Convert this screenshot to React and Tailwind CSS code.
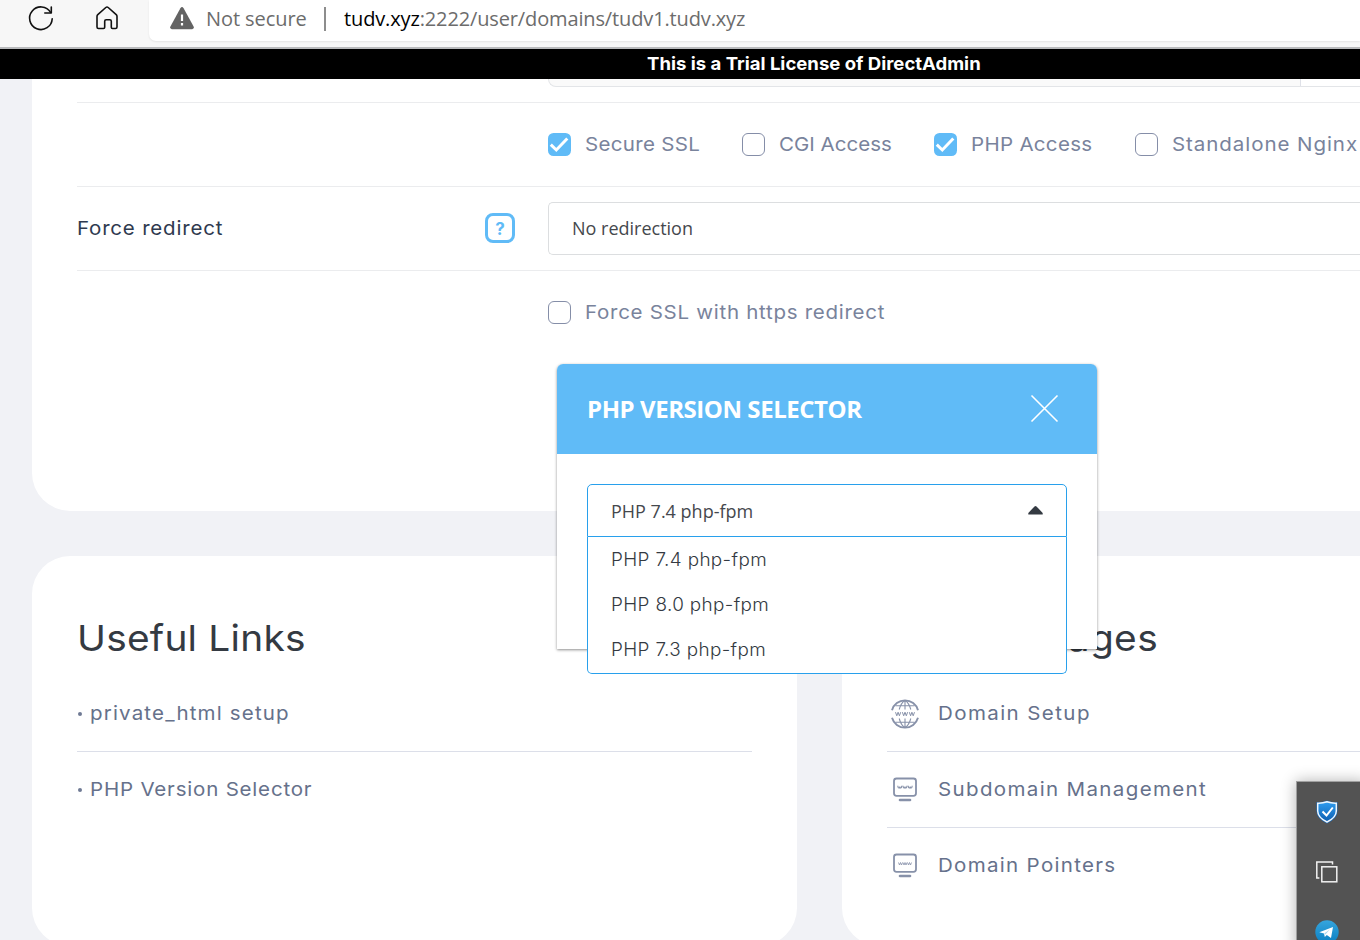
function BrowserBar() {
  return (
    <header className="flex h-[49px] shrink-0 items-start border-b-2 border-[#b9babc] bg-[#f7f7f7]">
      <div className="flex w-[149px] shrink-0 gap-[40px] pt-[4px] pl-[27px]">
        <svg width="28" height="28" viewBox="0 0 28 28" fill="none" stroke="#111" strokeWidth="1.6" strokeLinecap="round" strokeLinejoin="round">
          <path d="M25.2 14.7A11.3 11.3 0 1 1 23.6 8.400" />
          <path d="M24.300 3v6h-6.500" />
        </svg>
        <svg width="24" height="28" viewBox="0 0 24 28" fill="none" stroke="#111" strokeWidth="1.6" strokeLinejoin="round">
          <path d="M2 12.4q0-1 .8-1.700l8-7.200q1.200-1 2.400 0l8 7.200q.8.700.8 1.700v10.600q0 1.500-1.500 1.500h-3q-1.200 0-1.200-1.200v-6.100q0-1.500-1.500-1.500h-3.600q-1.500 0-1.500 1.500v6.100q0 1.200-1.200 1.200h-5q-1.500 0-1.500-1.500z" />
        </svg>
      </div>
      <div className="flex h-[41px] min-w-0 flex-1 rounded-bl-[7px] bg-white pl-[21px] font-['Open_Sans',sans-serif] text-[20px] leading-[28px] whitespace-nowrap text-[#6c6c6c] shadow-[0_1px_2px_rgba(0,0,0,0.08)]">
        <svg className="mt-[7px] shrink-0" width="24" height="23" viewBox="0 0 24 23">
          <path d="M10.400 1.200q1.600-2.200 3.200 0l10 18.200q.9 2.500-1.500 2.900H1.900q-2.400-.4-1.500-2.900z" fill="#636363" />
          <path d="M12 7.500v6.500M12 16v2.400" stroke="#fff" strokeWidth="2.200" />
        </svg>
        <span className="mt-[5px] ml-[12px] w-[100px] shrink-0 tracking-[-0.08px]">Not secure</span>
        <span className="mt-[7px] ml-[18px] h-[24px] w-[2px] shrink-0 bg-[#8d8d8d]" />
        <span className="mt-[5px] ml-[18px] tracking-[-0.134px]">
          <span className="text-black">tudv.xyz</span>:2222/user/domains/tudv1.tudv.xyz
        </span>
      </div>
    </header>
  );
}

function CheckItem({ on, className, children }) {
  return (
    <label className="flex items-center whitespace-nowrap text-[#79839c]">
      {on ? (
        <svg className="mr-[13px] shrink-0" width="24" height="24" viewBox="0 0 24 24">
          <rect x="0" y="0" width="23" height="23" rx="5.500" fill="#60bbf7" />
          <path d="M2.800 11.700l5.500 5.300L19.300 5.500" fill="none" stroke="#fff" strokeWidth="3" />
        </svg>
      ) : (
        <span className="mr-[14px] mb-px h-[23px] w-[23px] shrink-0 rounded-[6px] border border-[#858ea8] bg-white" />
      )}
      <span className={`inline-block origin-left scale-x-[1.08] ${className}`}>{children}</span>
    </label>
  );
}

function SettingsCard() {
  return (
    <section className="ml-[32px] h-[432px] shrink-0 rounded-bl-[38px] bg-white pl-[45px] text-[19px] leading-[28px]">
      <div className="h-[24px] border-b border-[#ebecee] pl-[471px]">
        <div className="flex h-[8px] overflow-hidden rounded-bl-[14px] border-b border-l border-[#e3e5e8] bg-[#fafafa]">
          <div className="w-[752px] shrink-0 border-r border-[#dfe1e8]" />
          <div className="flex-1 bg-white" />
        </div>
      </div>
      <div className="flex h-[84px] items-center border-b border-[#ebecee] pt-px pl-[471px]">
        <div className="w-[194px] shrink-0"><CheckItem on className="tracking-[0.3px]">Secure SSL</CheckItem></div>
        <div className="w-[192px] shrink-0"><CheckItem className="tracking-[0.01px]">CGI Access</CheckItem></div>
        <div className="w-[201px] shrink-0"><CheckItem on className="tracking-[0.27px]">PHP Access</CheckItem></div>
        <CheckItem className="tracking-[0.86px]">Standalone Nginx</CheckItem>
      </div>
      <div className="flex h-[84px] items-center border-b border-[#ebecee] pt-px">
        <div className="w-[408px] shrink-0 text-[#2f3a4f]">
          <span className="inline-block origin-left scale-x-[1.08] tracking-[0.73px]">Force redirect</span>
        </div>
        <span className="mr-[33px] mb-[2px] flex h-[30px] w-[30px] shrink-0 items-center justify-center rounded-[8px] border-[3px] border-[#60bbf7] pt-px text-[17px] font-bold text-[#60bbf7]">?</span>
        <div className="mb-px flex h-[53px] flex-1 items-center rounded-l-[5px] border border-r-0 border-[#dcdee0] pb-px pl-[23px] font-['Open_Sans',sans-serif] text-[18px] text-[#45484d]">No redirection</div>
      </div>
      <div className="flex h-[84px] items-center pl-[471px]">
        <CheckItem className="tracking-[0.66px]">Force SSL with https redirect</CheckItem>
      </div>
    </section>
  );
}

function GlobeIcon() {
  return (
    <svg className="mb-px" width="28" height="30" viewBox="0 0 28 30" fill="none" stroke="#8791a9" strokeWidth="1.900">
      <path d="M1 11.200a13.500 13.500 0 0 1 26 0M1 18.800a13.500 13.500 0 0 0 26 0" />
      <path d="M14 1.500v9M14 19.500v9M8.200 10.500Q10 4 13.500 1.700M19.800 10.500Q18 4 14.500 1.700M8.200 19.500q1.800 6.500 5.300 8.800M19.800 19.500q-1.800 6.500-5.300 8.800M4.500 6.800h19M4.500 23.200h19" strokeWidth="1.100" />
      <path d="M4.500 13.200l1.300 3.600 1.300-3.600 1.300 3.600 1.300-3.600M11.400 13.200l1.300 3.600 1.300-3.600 1.300 3.600 1.300-3.600M18.300 13.200l1.300 3.600 1.300-3.600 1.300 3.600 1.300-3.600" strokeWidth="1" />
    </svg>
  );
}

function MonitorIcon({ small }) {
  return (
    <svg width="28" height="30" viewBox="0 0 28 30" fill="none" stroke="#8791a9">
      <rect x="3" y="3.500" width="22" height="17.300" rx="2.500" strokeWidth="1.800" />
      <path d="M9 25h10" strokeWidth="2.600" strokeLinecap="round" />
      {small ? (
        <path d="M7.500 11.500l1 2.500 1-2.500 1 2.500 1-2.500M12 11.500l1 2.500 1-2.500 1 2.500 1-2.500M16.500 11.500l1 2.500 1-2.500 1 2.500 1-2.500" strokeWidth=".8" />
      ) : (
        <path d="M6.800 10.800q.2 2.200 1 2.200t1-1.400q.2 1.400 1 1.400t1-2.200M12 10.800q.2 2.200 1 2.200t1-1.400q.2 1.400 1 1.400t1-2.200M17.200 10.800q.2 2.200 1 2.200t1-1.400q.2 1.400 1 1.400t1-2.200" strokeWidth="1.200" />
      )}
    </svg>
  );
}

function BottomCards() {
  return (
    <div className="mt-[45px] flex h-[390px] shrink-0 gap-[45px] pl-[32px] text-[19px] leading-[28px] font-normal whitespace-nowrap text-[#66718b]">
      <section className="w-[765px] shrink-0 rounded-[38px] bg-white px-[45px] pt-[52px]">
        <h2 className="mb-[8px] h-[60px] w-[300px] origin-left scale-x-[1.08] text-[36px] leading-[60px] font-normal tracking-[0.2px] text-[#343a42]">Useful Links</h2>
        <div className="flex h-[76px] items-center border-b border-[#dcdfe9] pt-px">
          <span className="mr-[8px] ml-[1px] h-[4px] w-[4px] rounded-full bg-[#6f7a94]" />
          <span className="origin-left scale-x-[1.08] tracking-[1.08px]">private_html setup</span>
        </div>
        <div className="flex h-[76px] items-center">
          <span className="mr-[8px] ml-[1px] h-[4px] w-[4px] rounded-full bg-[#6f7a94]" />
          <span className="origin-left scale-x-[1.08] tracking-[0.74px]">PHP Version Selector</span>
        </div>
      </section>
      <section className="flex-1 rounded-l-[38px] bg-white pt-[52px] pl-[45px]">
        <h2 className="mb-[8px] h-[60px] w-[271px] origin-right scale-x-[1.08] text-right text-[36px] leading-[60px] font-normal tracking-[0.32px] text-[#343a42]">Related pages</h2>
        <div className="flex h-[76px] items-center border-b border-[#dcdfe9] pt-px pl-[4px]">
          <GlobeIcon /><span className="ml-[19px] origin-left scale-x-[1.08] tracking-[1.3px]">Domain Setup</span>
        </div>
        <div className="flex h-[76px] items-center border-b border-[#dcdfe9] pt-px pl-[4px]">
          <MonitorIcon /><span className="ml-[19px] origin-left scale-x-[1.08] tracking-[1.25px]">Subdomain Management</span>
        </div>
        <div className="flex h-[76px] items-center pl-[4px]">
          <MonitorIcon small /><span className="ml-[19px] origin-left scale-x-[1.08] tracking-[1.21px]">Domain Pointers</span>
        </div>
      </section>
    </div>
  );
}

function VersionDialog() {
  return (
    <div className="absolute top-[364px] left-[557px] h-[285px] w-[540px] rounded-t-[6px] bg-white shadow-[0_1px_3px_rgba(0,0,0,0.45)]">
      <div className="flex h-[90px] items-center justify-between rounded-t-[6px] bg-[#60bbf7] pr-[37px] pl-[30px] font-['Open_Sans',sans-serif] text-white">
        <span className="text-[24px] font-bold tracking-[-0.44px]">PHP VERSION SELECTOR</span>
        <svg width="30" height="30" viewBox="0 0 30 30" stroke="#fff" strokeWidth="1.600"><path d="M1.500 1.500l26 26M27.500 1.500l-26 26" /></svg>
      </div>
      <div className="relative mx-[30px] mt-[30px]">
        <div className="flex h-[53px] items-center justify-between rounded-t-[5px] border border-[#28a0ec] pr-[23px] pl-[23px] font-['Open_Sans',sans-serif] text-[18px] leading-[28px] text-[#45484d]">
          <span className="pt-px">PHP 7.4 php-fpm</span>
          <svg width="15" height="9" viewBox="0 0 15 9"><path d="M6.500.5q1-.8 2 0l6.200 6.400v1.600H.3V6.900z" fill="#343a42" /></svg>
        </div>
        <ul className="absolute top-[53px] left-0 w-[480px] rounded-b-[5px] border border-t-0 border-[#28a0ec] bg-white pb-px pl-[23px] text-[18px] leading-[45px] font-light tracking-[0.34px] text-[#343a42]">
          <li className="origin-left scale-x-[1.05]">PHP 7.4 php-fpm</li>
          <li className="origin-left scale-x-[1.05]">PHP 8.0 php-fpm</li>
          <li className="origin-left scale-x-[1.05]">PHP 7.3 php-fpm</li>
        </ul>
      </div>
    </div>
  );
}

function TrayDock() {
  return (
    <aside className="absolute top-[781px] left-[1296px] flex h-[170px] w-[70px] flex-col border border-[#a0a0a0] bg-[#535353] pl-[18px] shadow-[0_0_14px_rgba(0,0,0,0.3)]">
      <svg className="mt-[18px]" width="24" height="24" viewBox="0 0 24 24">
        <defs><linearGradient id="shield" x1="0" y1="0" x2="0" y2="1"><stop offset="0" stopColor="#2f9df0" /><stop offset="1" stopColor="#0d5db0" /></linearGradient></defs>
        <path d="M12 .5q5 2.200 10.500 1.500v9q0 7.500-10.500 12.500Q1.500 18.500 1.500 11V2Q7 2.700 12 .5z" fill="#1668b8" />
        <path d="M12 1.800q4.500 1.600 9.300 1.400V11q0 6.500-9.300 11Q2.700 17.500 2.700 11V3.200Q7.500 3.400 12 1.800z" fill="url(#shield)" stroke="#eef6fd" strokeWidth="1.500" />
        <path d="M7.500 11.500l4 4 6.300-8" fill="none" stroke="#fff" strokeWidth="2" />
      </svg>
      <svg className="mt-[36px] shrink-0" width="24" height="24" viewBox="0 0 24 24" fill="none" stroke="#f2f2f2" strokeWidth="1.500">
        <path d="M17.500 4.500V2H1.800V18h2.600" /><rect x="6.800" y="6.800" width="15" height="15" />
      </svg>
      <svg className="mt-[36px] shrink-0" width="24" height="24" viewBox="0 0 24 24">
        <defs><linearGradient id="plane" x1="0" y1="0" x2="0" y2="1"><stop offset="0" stopColor="#36a5dd" /><stop offset="1" stopColor="#0a7fc2" /></linearGradient></defs>
        <circle cx="12" cy="12" r="11.700" fill="url(#plane)" />
        <path d="M4.300 12.300L18 7l-2 11-4.200-3-2 2-.8-3.600z" fill="#fff" /><path d="M9.200 13.500L15 9.300l-4.600 5.200z" fill="#a9d5ee" />
      </svg>
    </aside>
  );
}

export default function App() {
  return (
    <div className="relative flex h-[940px] w-[1360px] flex-col overflow-hidden bg-[#f1f2f6] font-[Inter,sans-serif]">
      <BrowserBar />
      <div className="h-[30px] shrink-0 bg-black pl-[647px] text-[18px] leading-[30px] font-bold whitespace-nowrap text-white">
        <span className="inline-block origin-left scale-x-[1.03]">This is a Trial License of DirectAdmin</span>
      </div>
      <SettingsCard />
      <BottomCards />
      <VersionDialog />
      <TrayDock />
    </div>
  );
}
